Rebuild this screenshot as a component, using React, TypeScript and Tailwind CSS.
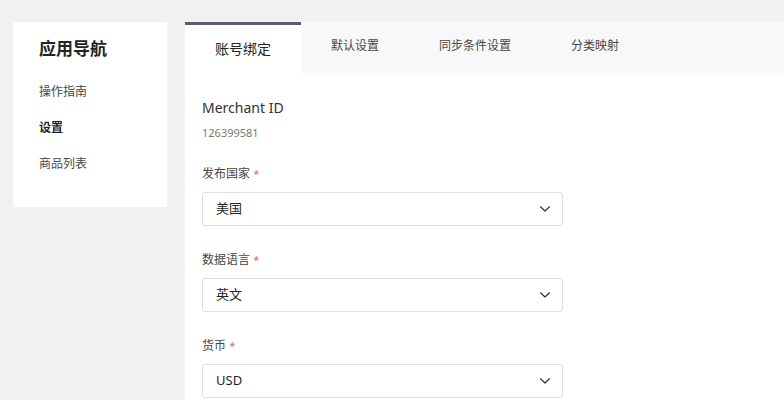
import React from "react";

const font = { fontFamily: '"Segoe UI", "Noto Sans", "Noto Sans CJK SC", sans-serif' };

function Chevron() {
  return (
    <svg width="12" height="8" viewBox="0 0 12 8" fill="none">
      <path d="M1.5 1.8 L6 6 L10.5 1.8" stroke="#333" strokeWidth="1.2" strokeLinecap="round" strokeLinejoin="round" />
    </svg>
  );
}

function Field({ label, value, first }: { label: string; value: string; first?: boolean }) {
  return (
    <div className={first ? "mt-[24px]" : "mt-[25px]"}>
      <div className="text-[12px] leading-[18px] text-[#484644]">
        {label} <span className="text-[11px] text-[#d0707f]">*</span>
      </div>
      <div className="mt-[9px] w-[361px] h-[34px] border border-[#e1dfdd] rounded-[3px] bg-white flex items-center justify-between pl-[13px] pr-[11px]">
        <span className="text-[13px] text-[#252423]">{value}</span>
        <Chevron />
      </div>
    </div>
  );
}

export default function App() {
  const tabs = ["默认设置", "同步条件设置", "分类映射"];
  return (
    <div className="w-[784px] h-[400px] overflow-hidden bg-[#f1f1f1] flex gap-[18px] pt-[22px] pl-[13px]" style={font}>
      <div className="w-[154px] h-[185px] bg-white pl-[26px] pt-[15px] shrink-0">
        <div className="text-[17px] leading-[24px] font-bold text-[#252423]">应用导航</div>
        <div className="mt-[22px] flex flex-col gap-[18px] text-[12px] leading-[18px] text-[#484644]">
          <div>操作指南</div>
          <div className="font-bold text-[#252423]">设置</div>
          <div>商品列表</div>
        </div>
      </div>
      <div className="flex-1 bg-white flex flex-col">
        <div className="h-[51px] bg-[#f8f8f8] flex shrink-0">
          <div className="bg-white border-t-[3px] border-[#5b5a6e] px-[30px] flex items-center text-[14px] text-[#252423]">
            <span className="-mt-[2px]">账号绑定</span>
          </div>
          {tabs.map((t) => (
            <div key={t} className="px-[30px] flex items-center text-[12px] text-[#484644] pb-[3px]">
              {t}
            </div>
          ))}
        </div>
        <div className="pl-[17px] pt-[25px]">
          <div className="text-[14px] leading-[20px] text-[#323130]">Merchant ID</div>
          <div className="mt-[7px] text-[11px] leading-[16px] text-[#7a7774]">126399581</div>
          <Field label="发布国家" value="美国" first />
          <Field label="数据语言" value="英文" />
          <Field label="货币" value="USD" />
        </div>
      </div>
    </div>
  );
}
